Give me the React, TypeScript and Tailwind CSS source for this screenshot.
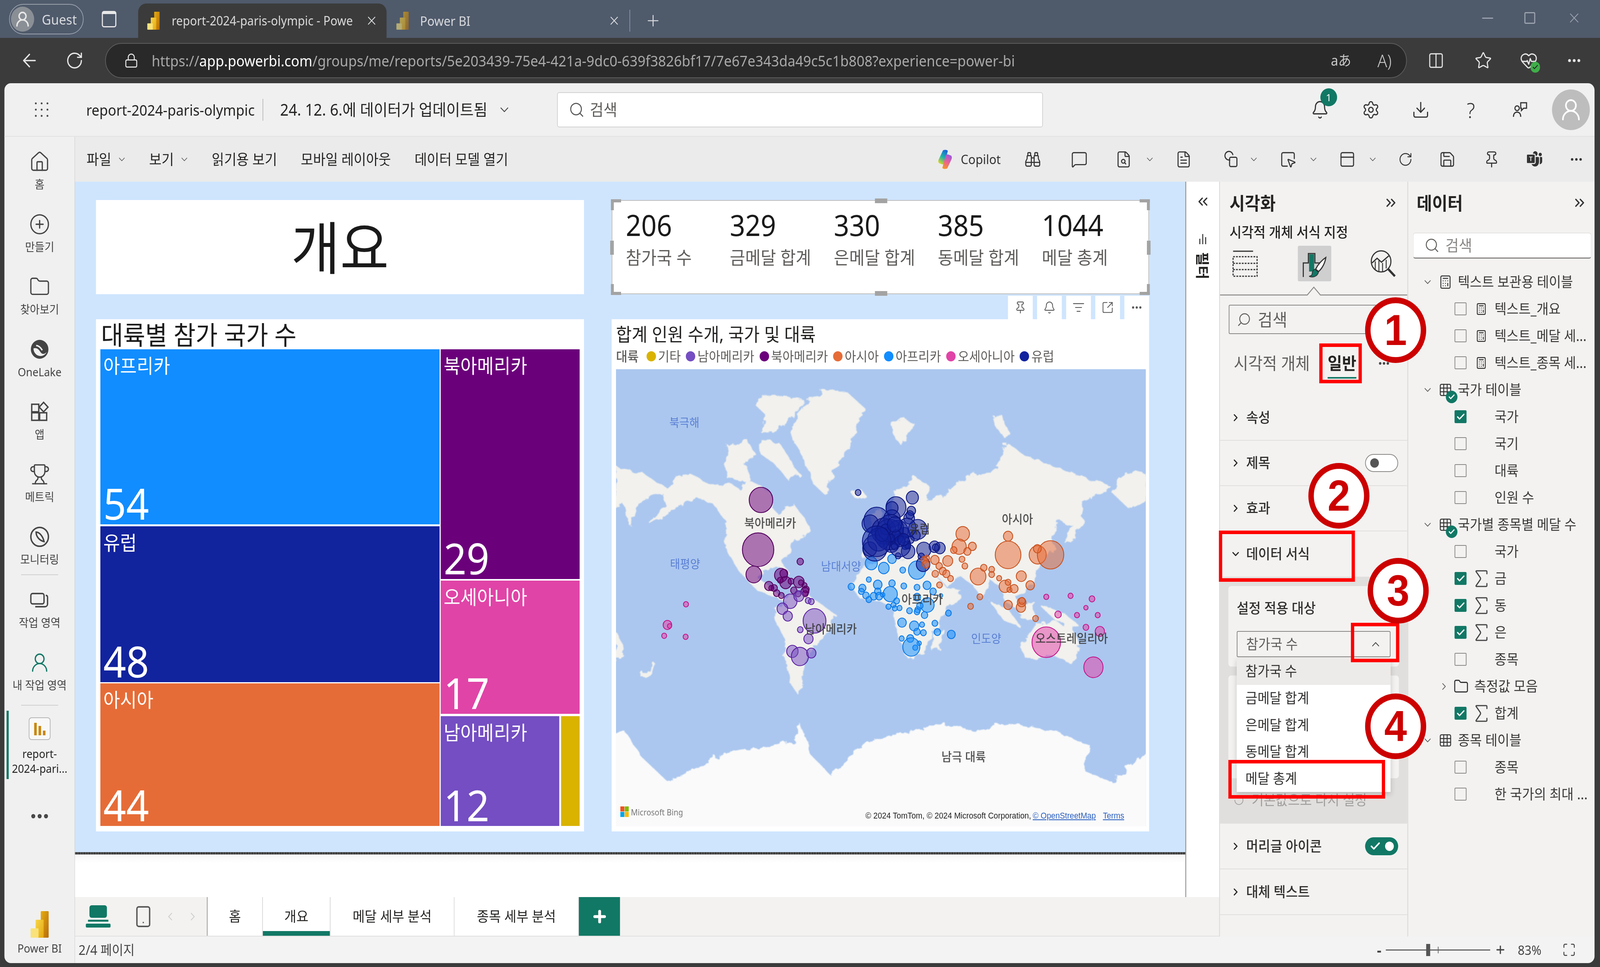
import type { ReactNode } from "react";
import {
  ArrowLeft,
  Bell,
  Binoculars,
  Calculator,
  Check,
  ChevronDown,
  ChevronLeft,
  ChevronRight,
  ChevronUp,
  ChevronsLeft,
  ChevronsRight,
  CirclePlus,
  Columns2,
  Download,
  Ellipsis,
  FileSearch,
  FileText,
  Folder,
  Grid3x3,
  HeartPulse,
  House,
  ListFilter,
  Lock,
  Maximize,
  MessageSquare,
  PanelTop,
  Pin,
  Plus,
  RotateCw,
  Save,
  Search,
  Settings,
  Sigma,
  Smartphone,
  SquareArrowOutUpRight,
  SquareMousePointer,
  Star,
  Trophy,
  UserRound,
  X,
} from "lucide-react";
import { BsMicrosoftTeams } from "react-icons/bs";

function PowerBiIcon({ className }: { className?: string }) {
  return (
    <svg viewBox="0 0 50 68" className={className}>
      <defs>
        <linearGradient id="pb-a" x1="0" y1="0" x2="1" y2="1">
          <stop offset="0" stopColor="#e6ad10" />
          <stop offset="1" stopColor="#b66a08" />
        </linearGradient>
        <linearGradient id="pb-b" x1="0" y1="0" x2="1" y2="1">
          <stop offset="0" stopColor="#f6d54a" />
          <stop offset="1" stopColor="#e5a80f" />
        </linearGradient>
      </defs>
      <rect x="28" y="0" width="22" height="68" rx="2" fill="url(#pb-a)" />
      <rect x="14" y="22" width="22" height="46" rx="2" fill="url(#pb-b)" />
      <rect x="0" y="44" width="22" height="24" rx="2" fill="#f9e27a" />
    </svg>
  );
}

function CopilotIcon() {
  return (
    <svg viewBox="0 0 46 60" className="h-[50px] w-[46px]">
      <defs>
        <linearGradient id="co-a" x1="0.7" y1="0" x2="0.2" y2="1">
          <stop offset="0" stopColor="#1b66d8" />
          <stop offset="0.5" stopColor="#21b4a8" />
          <stop offset="1" stopColor="#e8d71e" />
        </linearGradient>
        <linearGradient id="co-b" x1="0.7" y1="0" x2="0.3" y2="1">
          <stop offset="0" stopColor="#9a58e0" />
          <stop offset="0.5" stopColor="#e8609a" />
          <stop offset="1" stopColor="#f7942a" />
        </linearGradient>
      </defs>
      <path d="M16 2C22 0 30 0 32 4L22 40C20 46 14 46 10 44L4 42C0 40 0 34 2 30Z" fill="url(#co-a)" />
      <path d="M30 58C24 60 16 60 14 56L24 20C26 14 32 14 36 16L42 18C46 20 46 26 44 30Z" fill="url(#co-b)" />
    </svg>
  );
}

function ShapesIcon() {
  return (
    <svg viewBox="0 0 24 24" className="h-[44px] w-[44px]" fill="none" stroke="#333" strokeWidth="1.6">
      <path d="M11 12.5A6 6 0 1 1 15 6" />
      <rect x="10" y="9" width="11" height="13" rx="2" />
    </svg>
  );
}

function ShareIcon() {
  return (
    <svg viewBox="0 0 24 24" className="h-[48px] w-[48px]" fill="none" stroke="#333" strokeWidth="1.5">
      <circle cx="8" cy="10" r="3" />
      <path d="M3 21c0-4 2-6 5-6s5 2 5 6" />
      <path d="M13 3h8v7h-4l-3 3v-3h-1z" />
    </svg>
  );
}

function OneLakeIcon() {
  return (
    <svg viewBox="0 0 24 24" className="h-[58px] w-[58px]">
      <circle cx="12" cy="12" r="10" fill="#444" />
      <path d="M5 11c4-1 6 1 8 4s5 2 7 0a8 8 0 0 1-15-4z" fill="#f0f0f0" />
      <path d="M8 8c3 0 5 2 7 5" stroke="#f0f0f0" strokeWidth="1.6" fill="none" />
    </svg>
  );
}

function AppsIcon() {
  return (
    <svg viewBox="0 0 24 24" className="h-[58px] w-[58px]" fill="none" stroke="#444" strokeWidth="1.5">
      <rect x="3" y="4" width="8" height="8" />
      <rect x="3" y="13" width="8" height="8" />
      <rect x="12" y="13" width="8" height="8" />
      <path d="M16.5 2l5 5-5 5-5-5z" />
    </svg>
  );
}

function MonitorIcon() {
  return (
    <svg viewBox="0 0 24 24" className="h-[58px] w-[58px]" fill="none" stroke="#444" strokeWidth="1.6">
      <circle cx="12" cy="12" r="10" />
      <path d="M8 7c4 0 8 5 9 10C12 16 8 12 8 7z" />
    </svg>
  );
}

function WorkspacesIcon() {
  return (
    <svg viewBox="0 0 24 24" className="h-[58px] w-[58px]" fill="none" stroke="#444" strokeWidth="1.5">
      <rect x="2" y="5" width="15" height="11" rx="2" />
      <path d="M19 7c1.500 0 2 .8 2 2v7c0 1.500-1 3-3 3H7" />
    </svg>
  );
}

function ReportNavIcon() {
  return (
    <div className="flex h-[58px] w-[60px] items-end justify-center gap-[5px] rounded-[8px] border-2 border-[#b5b5b5] bg-[#f8f8f8] pb-[10px]">
      <span className="h-[32px] w-[7px] bg-[#c9860c]" />
      <span className="h-[24px] w-[7px] bg-[#c9860c]" />
      <span className="h-[12px] w-[7px] bg-[#c9860c]" />
    </div>
  );
}

function NavItem({ icon, label, active }: { icon: ReactNode; label: string; active?: boolean }) {
  return (
    <div className="flex h-[160px] flex-col items-center justify-end gap-[12px] pb-[24px]">
      <div className="flex h-[62px] items-center">{icon}</div>
      <span className={`text-[29px] leading-none ${active ? "text-[#117865]" : "text-[#444]"}`}>{label}</span>
    </div>
  );
}

function LeftNav() {
  const ic = "h-[58px] w-[58px] text-[#444]";
  return (
    <div className="flex w-[194px] flex-col bg-[#f0f0f0]">
      <NavItem icon={<House className={ic} strokeWidth={1.4} />} label="홈" />
      <NavItem icon={<CirclePlus className={ic} strokeWidth={1.4} />} label="만들기" />
      <NavItem icon={<Folder className={ic} strokeWidth={1.4} />} label="찾아보기" />
      <NavItem icon={<OneLakeIcon />} label="OneLake" />
      <NavItem icon={<AppsIcon />} label="앱" />
      <NavItem icon={<Trophy className={ic} strokeWidth={1.4} />} label="메트릭" />
      <NavItem icon={<MonitorIcon />} label="모니터링" />
      <div className="mx-[46px] h-[2px] bg-[#d0d0d0]" />
      <NavItem icon={<WorkspacesIcon />} label="작업 영역" />
      <NavItem
        icon={<UserRound className="h-[58px] w-[58px] text-[#117865]" strokeWidth={1.4} />}
        label="내 작업 영역"
      />
      <div className="mx-[46px] mt-[12px] h-[2px] bg-[#d0d0d0]" />
      <div className="relative mt-[30px] flex h-[158px] flex-col items-center gap-[16px]">
        <span className="absolute bottom-0 left-[6px] top-[-17px] w-[6px] bg-[#117865]" />
        <ReportNavIcon />
        <span className="text-center text-[29px] leading-[38px] text-[#252423]">
          report-
          <br />
          2024-pari...
        </span>
      </div>
      <div className="flex h-[190px] items-center justify-center">
        <Ellipsis className="h-[60px] w-[60px] text-[#444]" strokeWidth={2.4} />
      </div>
      <div className="mt-auto flex flex-col items-center gap-[12px] pb-[24px]">
        <PowerBiIcon className="h-[68px] w-[50px]" />
        <span className="text-[29px] leading-none text-[#444]">Power BI</span>
      </div>
    </div>
  );
}

function BrowserBars() {
  return (
    <>
      <div className="flex h-[97px] items-end bg-[#4f5a6b] text-[#d8dadd]">
        <div className="mb-[9px] ml-[25px] flex h-[78px] w-[205px] items-center rounded-[39px] border-2 border-[#98a0ac] pl-[3px]">
          <div className="flex h-[64px] w-[64px] items-center justify-center rounded-full bg-[#8a8f96]">
            <UserRound className="h-[46px] w-[46px] text-[#e8e8e8]" strokeWidth={2} />
          </div>
          <span className="ml-[21px] text-[35px] leading-none">Guest</span>
        </div>
        <div className="mb-[27px] ml-[50px] h-[42px] w-[40px] rounded-[6px] border-[3px] border-t-[8px] border-[#e8e8e8]" />
        <div className="ml-[60px] flex h-[88px] w-[683px] items-center rounded-t-[22px] bg-[#3b3b3b] pl-[22px]">
          <PowerBiIcon className="h-[46px] w-[40px]" />
          <span className="ml-[30px] w-[520px] whitespace-nowrap text-[32px] leading-none text-[#d9d9d9]">
            report-2024-paris-olympic - Powe
          </span>
          <X className="ml-[12px] h-[36px] w-[36px]" strokeWidth={1.6} />
        </div>
        <div className="flex h-[88px] items-center">
          <PowerBiIcon className="ml-[24px] h-[46px] w-[40px] opacity-60" />
          <span className="ml-[28px] w-[516px] text-[33px] leading-none">Power BI</span>
          <X className="h-[36px] w-[36px]" strokeWidth={1.6} />
          <div className="ml-[24px] h-[56px] w-[2px] bg-[#8a93a0]" />
          <Plus className="ml-[40px] h-[46px] w-[46px]" strokeWidth={1.4} />
        </div>
        <div className="mb-[30px] ml-auto flex items-center gap-[86px] pr-[50px] text-[#9aa2ae]">
          <div className="h-[3px] w-[30px] bg-[#9aa2ae]" />
          <div className="h-[30px] w-[30px] rounded-[4px] border-[3px] border-[#9aa2ae]" />
          <X className="h-[42px] w-[42px]" strokeWidth={1.2} />
        </div>
      </div>
      <div className="flex h-[116px] items-center bg-[#3b3b3b] text-[#e6e6e6]">
        <ArrowLeft className="ml-[54px] h-[54px] w-[54px]" strokeWidth={1.6} />
        <RotateCw className="ml-[72px] h-[50px] w-[50px]" strokeWidth={1.6} />
        <div className="ml-[59px] flex h-[90px] w-[3580px] items-center rounded-[45px] border-2 border-[#5d5d5d] bg-[#292929]">
          <Lock className="ml-[50px] h-[40px] w-[40px]" strokeWidth={1.6} />
          <span className="ml-[36px] text-[38px] leading-none text-[#a8a8a8]">
            https://<span className="text-white">app.powerbi.com</span>
            /groups/me/reports/5e203439-75e4-421a-9dc0-639f3826bf17/7e67e343da49c5c1b808?experience=power-bi
          </span>
          <span className="ml-auto text-[36px] leading-none text-[#c8c8c8]">aあ</span>
          <span className="ml-[72px] mr-[40px] text-[44px] font-light leading-none text-[#c8c8c8]">A)</span>
        </div>
        <Columns2 className="ml-[57px] h-[46px] w-[46px]" strokeWidth={1.5} />
        <Star className="ml-[83px] h-[48px] w-[48px]" strokeWidth={1.5} />
        <div className="relative ml-[76px]">
          <HeartPulse className="h-[50px] w-[50px]" strokeWidth={1.5} />
          <span className="absolute bottom-[-6px] right-[-6px] flex h-[28px] w-[26px] items-center justify-center rounded-full bg-[#3fae49]">
            <Check className="h-[18px] w-[18px] text-[#222]" strokeWidth={3} />
          </span>
        </div>
        <Ellipsis className="ml-[78px] h-[44px] w-[44px]" strokeWidth={2.2} />
      </div>
    </>
  );
}

function AppHeader() {
  const ic = "h-[50px] w-[50px] text-[#333]";
  return (
    <div className="flex h-[137px] items-center border-b-2 border-[#e2e2e2] bg-[#f0f0f0] text-[#252423]">
      <div className="flex w-[1520px] shrink-0 items-center">
        <div className="ml-[84px] grid grid-cols-3 gap-x-[11px] gap-y-[11px]">
          {Array.from({ length: 9 }).map((_, i) => (
            <span key={i} className="h-[5px] w-[5px] rounded-full bg-[#444]" />
          ))}
        </div>
        <span className="ml-[104px] text-[38px] leading-none">report-2024-paris-olympic</span>
        <div className="ml-[22px] h-[56px] w-[2px] bg-[#bbb]" />
        <span className="ml-[46px] text-[41px] leading-none">24. 12. 6.에 데이터가 업데이트됨</span>
        <ChevronDown className="ml-[28px] h-[38px] w-[38px] text-[#444]" strokeWidth={1.5} />
      </div>
      <div className="flex h-[90px] w-[1336px] items-center rounded-[6px] border-2 border-[#d2d2d2] bg-white">
        <Search className="ml-[30px] h-[44px] w-[44px] text-[#555]" strokeWidth={1.5} />
        <span className="ml-[14px] text-[41px] leading-none text-[#605e5c]">검색</span>
      </div>
      <div className="ml-auto flex items-center pr-[13px]">
        <div className="relative">
          <Bell className={ic} strokeWidth={1.5} />
          <span className="absolute right-[-22px] top-[-30px] flex h-[46px] w-[46px] items-center justify-center rounded-full bg-[#117865] text-[26px] leading-none text-white">
            1
          </span>
        </div>
        <Settings className={`ml-[90px] ${ic}`} strokeWidth={1.5} />
        <Download className={`ml-[87px] ${ic}`} strokeWidth={1.5} />
        <span className="ml-[94px] w-[38px] text-center text-[54px] font-light leading-none text-[#333]">?</span>
        <div className="ml-[92px]">
          <ShareIcon />
        </div>
        <div className="ml-[64px] flex h-[104px] w-[104px] items-center justify-center rounded-full bg-[#bdbdbd]">
          <UserRound className="h-[66px] w-[66px] text-white" strokeWidth={1.6} />
        </div>
      </div>
    </div>
  );
}

function ToolText({ label, chevron, className }: { label: string; chevron?: boolean; className: string }) {
  return (
    <div className={`flex items-center gap-[15px] ${className}`}>
      <span className="text-[37px] leading-none">{label}</span>
      {chevron && <ChevronDown className="h-[28px] w-[28px] text-[#555]" strokeWidth={1.5} />}
    </div>
  );
}

function Chev({ className }: { className: string }) {
  return <ChevronDown className={`h-[28px] w-[28px] text-[#555] ${className}`} strokeWidth={1.5} />;
}

function Toolbar() {
  const ic = "h-[46px] w-[46px] text-[#333]";
  return (
    <div className="flex h-[115px] items-center bg-[#ebebeb] text-[#252423]">
      <ToolText label="파일" chevron className="ml-[32px]" />
      <ToolText label="보기" chevron className="ml-[61px]" />
      <ToolText label="읽기용 보기" className="ml-[61px]" />
      <ToolText label="모바일 레이아웃" className="ml-[65px]" />
      <ToolText label="데이터 모델 열기" className="ml-[65px]" />
      <div className="ml-auto flex items-center pr-[30px]">
        <CopilotIcon />
        <span className="ml-[20px] text-[33px] leading-none text-[#333]">Copilot</span>
        <Binoculars className={`ml-[65px] ${ic}`} strokeWidth={1.5} />
        <MessageSquare className={`ml-[82px] ${ic}`} strokeWidth={1.5} />
        <FileSearch className={`ml-[76px] ${ic}`} strokeWidth={1.5} />
        <Chev className="ml-[35px]" />
        <FileText className={`ml-[56px] ${ic}`} strokeWidth={1.5} />
        <div className="ml-[85px]">
          <ShapesIcon />
        </div>
        <Chev className="ml-[27px]" />
        <SquareMousePointer className={`ml-[57px] ${ic}`} strokeWidth={1.5} />
        <Chev className="ml-[33px]" />
        <PanelTop className={`ml-[56px] ${ic}`} strokeWidth={1.5} />
        <Chev className="ml-[33px]" />
        <RotateCw className="ml-[56px] h-[40px] w-[40px] text-[#333]" strokeWidth={1.5} />
        <Save className={`ml-[72px] ${ic}`} strokeWidth={1.5} />
        <Pin className={`ml-[76px] ${ic}`} strokeWidth={1.5} />
        <BsMicrosoftTeams className="ml-[74px] h-[42px] w-[42px] text-[#333]" />
        <Ellipsis className="ml-[74px] h-[40px] w-[40px] text-[#333]" strokeWidth={2} />
      </div>
    </div>
  );
}

function TreeCell({ label, value, color, className }: { label: string; value: number; color: string; className: string }) {
  return (
    <div className={`flex flex-col justify-between pl-[8px] text-white ${color} ${className}`}>
      <span className="pt-[12px] text-[50px] leading-[60px]">{label}</span>
      <span className="text-[110px] leading-none">{value}</span>
    </div>
  );
}

function Treemap() {
  return (
    <div className="bg-white pl-[12px]">
      <div className="flex h-[77px] items-center pl-[2px] text-[66px] leading-none text-[#1a1a1a]">대륙별 참가 국가 수</div>
      <div className="flex w-[1318px] gap-[3px]">
        <div className="flex w-[933px] flex-col">
          <TreeCell label="아프리카" value={54} color="bg-[#118dff]" className="h-[448px]" />
          <TreeCell label="유럽" value={48} color="bg-[#12239e]" className="mt-[5px] h-[399px]" />
          <TreeCell label="아시아" value={44} color="bg-[#e66c37]" className="mt-[3px] h-[365px]" />
        </div>
        <div className="flex w-[382px] flex-col">
          <TreeCell label="북아메리카" value={29} color="bg-[#6b007b]" className="h-[588px]" />
          <TreeCell label="오세아니아" value={17} color="bg-[#e044a7]" className="mt-[4px] h-[341px]" />
          <div className="mt-[6px] flex h-[281px] gap-[5px]">
            <TreeCell label="남아메리카" value={12} color="bg-[#744ec2]" className="w-[326px]" />
            <div className="w-[51px] bg-[#d9b300]" />
          </div>
        </div>
      </div>
    </div>
  );
}

const KPIS = [
  ["206", "참가국 수"],
  ["329", "금메달 합계"],
  ["330", "은메달 합계"],
  ["385", "동메달 합계"],
  ["1044", "메달 총계"],
];

function KpiCard() {
  const h = "absolute bg-[#a3a3a3]";
  return (
    <div className="relative border-2 border-[#bdbdbd] bg-white">
      <div className="flex pl-[37px] pt-[25px]">
        {KPIS.map(([value, label]) => (
          <div key={label} className="w-[286px]">
            <div className="text-[74px] leading-[74px] text-[#1a1a1a]">{value}</div>
            <div className="mt-[15px] text-[46px] leading-[60px] text-[#605e5c]">{label}</div>
          </div>
        ))}
      </div>
      {/* selection handles */}
      <span className={`${h} left-[-4px] top-[-4px] h-[8px] w-[28px]`} />
      <span className={`${h} left-[-4px] top-[-4px] h-[28px] w-[8px]`} />
      <span className={`${h} right-[-4px] top-[-4px] h-[8px] w-[28px]`} />
      <span className={`${h} right-[-4px] top-[-4px] h-[28px] w-[8px]`} />
      <span className={`${h} bottom-[-4px] left-[-4px] h-[8px] w-[28px]`} />
      <span className={`${h} bottom-[-4px] left-[-4px] h-[28px] w-[8px]`} />
      <span className={`${h} bottom-[-4px] right-[-4px] h-[8px] w-[28px]`} />
      <span className={`${h} bottom-[-4px] right-[-4px] h-[28px] w-[8px]`} />
      <span className={`${h} left-[722px] top-[-6px] h-[12px] w-[34px]`} />
      <span className={`${h} bottom-[-6px] left-[722px] h-[12px] w-[34px]`} />
      <span className={`${h} left-[-6px] top-[102px] h-[36px] w-[10px]`} />
      <span className={`${h} right-[-6px] top-[102px] h-[36px] w-[10px]`} />
    </div>
  );
}

const LAND = [
  // north america
  "M200 515L240 500 290 530 345 530 380 545 400 520 440 540 470 560 470 600 490 625 510 600 530 590 560 630 577 660 560 690 530 690 520 730 500 760 517 795 495 775 470 775 440 780 430 810 465 835 490 860 525 872 500 872 470 860 430 842 400 810 370 770 345 720 345 640 310 590 260 570 215 590 180 620 130 645 175 600 165 560Z",
  "M440 265L500 275 560 285 530 330 490 370 440 375 460 330 430 300Z",
  "M350 420L400 400 420 440 390 470 345 470Z",
  "M440 400L490 410 545 500 520 520 480 470 440 440Z",
  "M340 470L370 460 400 480 410 520 350 515Z",
  // greenland
  "M525 380L560 300 620 255 680 260 732 310 700 370 680 440 640 500 620 560 590 530 560 450Z",
  "M812 355L835 340 865 350 850 385 830 410 815 385Z",
  "M1090 335L1110 325 1135 380 1115 385Z",
  "M700 560L722 550 730 565 710 575Z",
  // south america
  "M520 870L560 850 600 880 652 920 630 960 600 1000 570 1030 555 1085 545 1150 525 1120 512 1050 510 990 480 930 490 890Z",
  // africa
  "M720 790L780 745 880 755 920 790 960 840 1002 850 950 910 915 980 890 1030 850 1040 822 960 812 900 770 872 722 870 692 830Z",
  "M925 980L950 960 940 1015 925 1025Z",
  // eurasia
  "M730 752L738 700 770 682 782 645 812 620 820 560 870 510 912 540 900 582 960 560 1020 510 1100 490 1130 410 1180 450 1260 480 1340 510 1420 540 1385 560 1342 582 1330 640 1310 650 1280 640 1250 690 1262 722 1222 762 1210 802 1190 842 1150 860 1172 905 1130 880 1110 830 1080 810 1060 865 1040 832 1000 800 962 832 920 782 880 762 842 745 790 745Z",
  "M750 625L775 605 778 655 750 660Z",
  "M1312 660L1330 620 1345 640 1320 690 1290 700Z",
  "M1440 510L1490 495 1518 505 1518 585 1470 600 1430 560Z",
  "M35 480L60 490 110 500 150 530 185 548 150 560 110 575 90 600 75 652 68 625 60 590 35 600Z",
  // islands, australia
  "M1085 880L1130 900 1165 950 1120 930Z",
  "M1165 890L1205 880 1205 930 1170 925Z",
  "M1230 895L1290 915 1330 950 1270 935Z",
  "M1170 1000L1200 960 1255 930 1285 950 1300 935 1335 1010 1310 1060 1270 1040 1180 1040Z",
  "M108 1100L140 1058 130 1085 118 1102Z",
  "M35 970L55 1010 45 1045 35 1052Z",
];

const ANTARCTICA =
  "M25 1265L60 1260 110 1340 180 1410 240 1380 330 1330 430 1310 480 1300 530 1290 555 1240 580 1330 640 1395 700 1320 760 1285 860 1260 960 1240 1040 1260 1140 1240 1260 1260 1360 1300 1350 1380 1420 1410 1490 1350 1530 1310 1530 1560 25 1560Z";

type Bubble = [number, number, number];

const BUBBLES: { color: string; stroke: string; items: Bubble[] }[] = [
  {
    color: "#6b007b",
    stroke: "#55005f",
    items: [
      [433, 725, 44], [441, 578, 33], [421, 798, 22], [551, 760, 9], [497, 800, 18], [505, 795, 11],
      [510, 822, 16], [547, 820, 15], [525, 818, 8], [495, 815, 8], [463, 832, 12], [478, 838, 9],
      [470, 838, 7], [485, 853, 9], [498, 860, 8], [533, 845, 9], [563, 830, 7], [567, 842, 9],
      [564, 848, 11], [565, 855, 8], [553, 822, 7], [545, 855, 8],
    ],
  },
  {
    color: "#744ec2",
    stroke: "#5a1fa0",
    items: [
      [591, 935, 32], [523, 877, 19], [501, 899, 15], [516, 921, 13], [547, 862, 14], [573, 875, 8],
      [582, 878, 8], [551, 961, 8], [574, 988, 13], [529, 1025, 16], [550, 1040, 24], [582, 1030, 13],
    ],
  },
  {
    color: "#118dff",
    stroke: "#0a78e6",
    items: [
      [878, 785, 24], [750, 765, 17], [785, 779, 15], [808, 752, 12], [838, 785, 8], [743, 813, 7],
      [768, 828, 12], [808, 824, 9], [841, 832, 8], [878, 836, 8], [906, 830, 11], [923, 848, 9],
      [694, 834, 9], [725, 838, 10], [722, 848, 8], [735, 860, 9], [743, 872, 8], [768, 848, 9],
      [757, 862, 10], [772, 862, 10], [782, 858, 6], [803, 856, 20], [821, 876, 8], [798, 893, 7],
      [812, 888, 7], [816, 898, 7], [829, 897, 7], [878, 865, 10], [907, 888, 19], [886, 890, 9],
      [880, 902, 8], [878, 908, 8], [857, 905, 8], [899, 918, 9], [966, 912, 8], [836, 940, 12],
      [870, 950, 13], [892, 946, 7], [878, 967, 9], [896, 970, 8], [928, 942, 8], [935, 968, 9],
      [974, 975, 11], [835, 987, 7], [859, 987, 10], [884, 1001, 6], [873, 1014, 7], [862, 1012, 24],
      [945, 860, 5],
    ],
  },
  {
    color: "#12239e",
    stroke: "#0b1580",
    items: [
      [713, 556, 8], [865, 571, 17], [819, 600, 28], [808, 602, 17], [862, 610, 12], [765, 640, 36],
      [747, 648, 23], [808, 633, 23], [856, 632, 15], [858, 622, 11], [785, 670, 34], [880, 665, 26],
      [825, 670, 28], [760, 720, 34], [746, 723, 19], [806, 708, 22], [853, 730, 19], [795, 670, 10],
      [810, 700, 8], [843, 675, 14], [820, 690, 18], [850, 710, 10], [873, 683, 14], [780, 708, 7],
      [800, 702, 8], [845, 713, 10], [853, 715, 7], [825, 743, 8], [897, 725, 20], [927, 716, 15],
      [942, 720, 15], [930, 718, 9], [890, 745, 9], [895, 768, 19], [835, 690, 12], [860, 695, 10],
      // dense middle of the cluster
      [800, 680, 40], [770, 695, 30], [830, 712, 30], [850, 660, 25], [804, 662, 36], [820, 680, 12],
      [790, 665, 14], [805, 690, 10], [830, 700, 14], [815, 715, 9], [840, 695, 16], [780, 680, 18],
      [815, 650, 20], [765, 700, 40],
    ],
  },
  {
    color: "#e66c37",
    stroke: "#c8521f",
    items: [
      [1006, 678, 19], [996, 716, 20], [1033, 715, 11], [1019, 730, 10], [981, 726, 9], [1133, 685, 13],
      [1133, 740, 36], [1216, 740, 24], [1252, 740, 37], [1215, 722, 11], [964, 758, 14], [928, 755, 12],
      [905, 750, 8], [898, 755, 9], [903, 768, 10], [940, 773, 9], [950, 788, 10], [960, 796, 10],
      [972, 810, 8], [929, 796, 9], [941, 829, 8], [1004, 753, 8], [1012, 773, 8], [1049, 804, 22],
      [1065, 778, 9], [1087, 783, 8], [1087, 798, 8], [1108, 809, 7], [1170, 803, 14], [1124, 833, 16],
      [1133, 821, 8], [1137, 843, 7], [1150, 840, 11], [1195, 830, 12], [1054, 864, 8], [1028, 892, 8],
      [1133, 888, 12], [1169, 895, 13], [1171, 880, 12], [1172, 876, 9], [1210, 928, 8],
    ],
  },
  {
    color: "#e044a7",
    stroke: "#c4168c",
    items: [
      [1240, 998, 40], [1372, 1072, 27], [1390, 966, 13], [1273, 916, 9], [1240, 864, 7], [1308, 861, 7],
      [1368, 870, 8], [1351, 896, 6], [1326, 918, 7], [1384, 918, 7], [1351, 954, 8], [231, 886, 7],
      [179, 947, 12], [185, 950, 6], [170, 979, 7], [230, 982, 7],
    ],
  },
];

const SEA_LABELS: [string, number, number][] = [
  ["북극해", 188, 135],
  ["태평양", 190, 497],
  ["남대서양", 619, 503],
  ["인도양", 1018, 688],
];

const LAND_LABELS: [string, number, number][] = [
  ["북아메리카", 424, 393],
  ["아시아", 1104, 383],
  ["유럽", 835, 408],
  ["아프리카", 842, 588],
  ["남아메리카", 591, 664],
  ["오스트레일리아", 1253, 688],
  ["남극 대륙", 956, 991],
];

function WorldMap() {
  return (
    <svg viewBox="0 0 1457 1170" className="block h-[1170px] w-[1457px] bg-[#abc7ef]">
      <defs>
        <clipPath id="map-clip">
          <rect width="1457" height="1170" />
        </clipPath>
        <filter id="coast" x="-5%" y="-5%" width="110%" height="110%">
          <feTurbulence type="fractalNoise" baseFrequency="0.035" numOctaves="4" seed="7" />
          <feDisplacementMap in="SourceGraphic" scale="26" />
          <feGaussianBlur stdDeviation="1" />
        </filter>
      </defs>
      <g clipPath="url(#map-clip)">
        <g transform="translate(-34.4 -166.5) scale(.982 .867)">
          <g filter="url(#coast)">
            {LAND.map((d, i) => (
              <path key={i} d={d} fill="#f2f1ed" stroke="#f2f1ed" strokeWidth="4" strokeLinejoin="round" />
            ))}
            <path d={ANTARCTICA} fill="#fafafa" />
          </g>
          {BUBBLES.map((g) =>
            g.items.map(([x, y, r], i) => (
              <ellipse
                key={g.color + i}
                cx={x}
                cy={y}
                rx={r}
                ry={r * 1.133}
                fill={g.color}
                fillOpacity={0.52}
                stroke={g.stroke}
                strokeWidth={2.4}
              />
            )),
          )}
        </g>
      </g>
      {SEA_LABELS.map(([t, x, y]) => (
        <text key={t} x={x} y={y} textAnchor="middle" dominantBaseline="central" fontSize="30" fill="#5a7fd4">
          {t}
        </text>
      ))}
      {LAND_LABELS.map(([t, x, y]) => (
        <text
          key={t}
          x={x}
          y={y}
          textAnchor="middle"
          dominantBaseline="central"
          fontSize="31"
          fontWeight="500"
          fill="#333"
          fillOpacity={0.85}
        >
          {t}
        </text>
      ))}
      <g transform="translate(12 1119)">
        <rect width="11" height="13" fill="#f25022" />
        <rect x="12" width="11" height="13" fill="#7fba00" />
        <rect y="14" width="11" height="13" fill="#00a4ef" />
        <rect x="12" y="14" width="11" height="13" fill="#ffb900" />
      </g>
      <text x="41" y="1142" fontSize="21" fill="#777">
        Microsoft Bing
      </text>
      <text x="686" y="1150" fontSize="21.500" fill="#222" fontFamily="'Liberation Sans',sans-serif">
        © 2024 TomTom, © 2024 Microsoft Corporation,
      </text>
      <text x="1146" y="1150" fontSize="21.500" fill="#2a5fc0" textDecoration="underline" fontFamily="'Liberation Sans',sans-serif">
        © OpenStreetMap
      </text>
      <text x="1339" y="1150" fontSize="21.500" fill="#2a5fc0" textDecoration="underline" fontFamily="'Liberation Sans',sans-serif">
        Terms
      </text>
    </svg>
  );
}

const LEGEND = [
  ["기타", "bg-[#d9b300]"],
  ["남아메리카", "bg-[#744ec2]"],
  ["북아메리카", "bg-[#6b007b]"],
  ["아시아", "bg-[#e66c37]"],
  ["아프리카", "bg-[#118dff]"],
  ["오세아니아", "bg-[#e044a7]"],
  ["유럽", "bg-[#12239e]"],
];

function MapCard() {
  const tile = "flex h-[60px] w-[68px] items-center justify-center bg-white";
  return (
    <div className="relative bg-white pl-[12px]">
      <div className="absolute right-0 top-[-60px] flex gap-[12px] text-[#555]">
        <div className={tile}>
          <Pin className="h-[34px] w-[34px]" strokeWidth={1.5} />
        </div>
        <div className={tile}>
          <Bell className="h-[34px] w-[34px]" strokeWidth={1.5} />
        </div>
        <div className={tile}>
          <ListFilter className="h-[34px] w-[34px]" strokeWidth={1.5} />
        </div>
        <div className={tile}>
          <SquareArrowOutUpRight className="h-[34px] w-[34px]" strokeWidth={1.5} />
        </div>
        <div className={tile}>
          <Ellipsis className="h-[34px] w-[34px]" strokeWidth={2.2} />
        </div>
      </div>
      <div className="flex h-[62px] items-end text-[47px] leading-none text-[#252423]">합계 인원 수개, 국가 및 대륙</div>
      <div className="flex h-[66px] items-center gap-[7px] text-[34px] leading-none text-[#605e5c]">
        <span className="mr-[14px] font-medium">대륙</span>
        {LEGEND.map(([label, dot]) => (
          <div key={label} className="mr-[7px] flex items-center gap-[6px]">
            <span className={`h-[26px] w-[26px] rounded-full ${dot}`} />
            <span>{label}</span>
          </div>
        ))}
      </div>
      <WorldMap />
    </div>
  );
}

function Canvas() {
  return (
    <div className="flex flex-1 flex-col">
      <div className="h-[1716px] bg-[#cfe5fe] pl-[58px] pt-[47px]">
        <div className="grid grid-cols-[1342px_1478px] grid-rows-[241px_1311px] gap-x-[76px] gap-y-[64px]">
          <div className="flex items-center justify-center bg-white text-[146px] leading-none text-[#1a1a1a]">개요</div>
          <KpiCard />
          <Treemap />
          <MapCard />
        </div>
      </div>
      <div className="h-[6px] bg-[repeating-linear-gradient(90deg,#555_0_3px,transparent_3px_7px)]" />
      <div className="flex-1 bg-gradient-to-b from-[#f6f6f6] to-white to-[20%]" />
    </div>
  );
}

function FilterStrip() {
  return (
    <div className="flex w-[93px] flex-col items-center border-l-2 border-[#8a8a8a] bg-white pt-[30px]">
      <ChevronsLeft className="h-[42px] w-[42px] text-[#333]" strokeWidth={2} />
      <div className="mt-[62px] flex h-[26px] items-end gap-[5px]">
        <span className="h-[14px] w-[3px] bg-[#444]" />
        <span className="h-[26px] w-[3px] bg-[#444]" />
        <span className="h-[18px] w-[3px] bg-[#444]" />
      </div>
      <span className="mt-[20px] text-[38px] font-bold leading-none text-[#252423] [text-orientation:sideways] [writing-mode:vertical-rl]">
        필터
      </span>
    </div>
  );
}

function PageTabs() {
  const tab = "flex items-center justify-center border-r-2 border-[#d8d8d8] bg-white text-[36px] leading-none text-[#252423]";
  return (
    <div className="flex h-[101px] border-b-2 border-[#e0e0e0] bg-[#f3f2f1]">
      <div className="flex w-[365px] items-center border-r-2 border-[#8a8a8a]">
        <div className="ml-[30px] flex flex-col items-center gap-[5px]">
          <div className="h-[32px] w-[48px] rounded-[6px] bg-[#117865]" />
          <div className="h-[5px] w-[56px] bg-[#117865]" />
          <div className="h-[10px] w-[68px] rounded-[3px] bg-[#117865]" />
        </div>
        <Smartphone className="ml-[60px] h-[60px] w-[60px] text-[#555]" strokeWidth={1.5} />
        <ChevronLeft className="ml-[27px] h-[34px] w-[34px] text-[#ccc]" strokeWidth={1.5} />
        <ChevronRight className="ml-[28px] h-[34px] w-[34px] text-[#ccc]" strokeWidth={1.5} />
      </div>
      <div className={`${tab} w-[152px]`}>홈</div>
      <div className={`${tab} relative w-[186px]`}>
        개요
        <span className="absolute bottom-0 left-0 right-0 h-[12px] bg-[#117865]" />
      </div>
      <div className={`${tab} w-[341px]`}>메달 세부 분석</div>
      <div className={`${tab} w-[342px] border-r-0`}>종목 세부 분석</div>
      <div className="flex w-[113px] items-center justify-center bg-[#117865]">
        <Plus className="h-[46px] w-[46px] text-white" strokeWidth={4} />
      </div>
    </div>
  );
}

function Toggle({ on }: { on: boolean }) {
  if (on) {
    return (
      <div className="mr-[25px] flex h-[46px] w-[91px] items-center justify-between rounded-full bg-[#117865] px-[12px]">
        <Check className="h-[32px] w-[32px] text-white" strokeWidth={3} />
        <span className="h-[24px] w-[24px] rounded-full bg-white" />
      </div>
    );
  }
  return (
    <div className="mr-[25px] flex h-[46px] w-[91px] items-center rounded-full border-2 border-[#8a8886] bg-white pl-[12px]">
      <span className="h-[24px] w-[24px] rounded-full bg-[#555]" />
    </div>
  );
}

function SectionRow({ label, open, toggle, className }: { label: string; open?: boolean; toggle?: boolean; className: string }) {
  return (
    <div className={`flex items-center border-b-2 border-[#e1dfdd] ${className}`}>
      {open ? (
        <ChevronDown className="ml-[28px] h-[30px] w-[30px] text-[#252423]" strokeWidth={2.4} />
      ) : (
        <ChevronRight className="ml-[28px] h-[30px] w-[30px] text-[#252423]" strokeWidth={2.4} />
      )}
      <span className="ml-[14px] text-[36px] font-medium leading-none text-[#323130]">{label}</span>
      {toggle !== undefined && (
        <div className="ml-auto">
          <Toggle on={toggle} />
        </div>
      )}
    </div>
  );
}

function BuildIcon() {
  return (
    <svg viewBox="0 0 70 70" className="h-[70px] w-[70px]" fill="none" stroke="#333">
      <path d="M2 3h55" strokeWidth="3" />
      <rect x="2" y="17" width="66" height="50" strokeWidth="3" strokeDasharray="5 3" />
      <path d="M2 34h66M2 50h66" strokeWidth="3" strokeDasharray="5 3" />
    </svg>
  );
}

function FormatIcon() {
  return (
    <svg viewBox="0 0 70 76" className="h-[76px] w-[70px]">
      <path d="M4 72V36h14v-24h18v24h14" fill="none" stroke="#333" strokeWidth="3" />
      <rect x="20" y="14" width="14" height="44" fill="#117865" />
      <path d="M66 22C56 28 44 40 38 52l8 6c10-8 18-22 20-36z" fill="#fff" stroke="#333" strokeWidth="3" />
      <path d="M36 52c-6 2-8 8-8 14-2 2-6 4-8 4 8 4 22 2 26-10z" fill="#117865" stroke="#333" strokeWidth="2" />
    </svg>
  );
}

function AnalyticsIcon() {
  return (
    <svg viewBox="0 0 72 72" className="h-[72px] w-[72px]" fill="none" stroke="#333" strokeWidth="3">
      <circle cx="30" cy="30" r="27" />
      <path d="M50 50l18 18" strokeWidth="6" />
      <path d="M5 34l14-12 12 10 20-16" stroke="#333" />
      <path d="M14 30v22M24 28v28M34 34v22M44 26v22" strokeWidth="2.500" />
    </svg>
  );
}

function VizPane() {
  return (
    <div className="flex w-[519px] flex-col border-x-2 border-[#e1dfdd] bg-[#f3f2f1]">
      <div className="flex h-[108px] items-center justify-between pl-[26px] pr-[24px]">
        <span className="text-[46px] font-bold leading-none text-[#252423]">시각화</span>
        <ChevronsRight className="h-[42px] w-[42px] text-[#333]" strokeWidth={2} />
      </div>
      <div className="flex h-[44px] items-center pl-[26px] text-[36px] font-medium leading-none text-[#252423]">
        시각적 개체 서식 지정
      </div>
      <div className="mt-[12px] flex h-[91px] items-center">
        <div className="ml-[34px]">
          <BuildIcon />
        </div>
        <div className="ml-[110px] flex h-[91px] w-[92px] items-center justify-center rounded-[4px] bg-[#cfcfcf]">
          <FormatIcon />
        </div>
        <div className="ml-[107px]">
          <AnalyticsIcon />
        </div>
      </div>
      <svg viewBox="0 0 515 37" className="block h-[37px] w-[515px]" fill="none" stroke="#8a8886" strokeWidth="2.500">
        <path d="M0 35H240L258 15 276 35H515" />
      </svg>
      <div className="ml-[24px] mt-[23px] flex h-[75px] w-[467px] items-center rounded-[4px] border-2 border-[#8a8886]">
        <Search className="ml-[20px] h-[40px] w-[40px] -scale-x-100 text-[#605e5c]" strokeWidth={1.5} />
        <span className="ml-[18px] text-[44px] leading-none text-[#605e5c]">검색</span>
      </div>
      <div className="flex h-[156px] items-start pt-[53px] text-[43px] leading-none">
        <span className="ml-[38px] text-[#605e5c]">시각적 개체</span>
        <div className="relative ml-[49px]">
          <span className="font-bold text-[#252423]">일반</span>
          <span className="absolute bottom-[-18px] left-0 right-0 h-[4px] bg-[#117865]" />
        </div>
        <Ellipsis className="ml-[58px] mt-[4px] h-[36px] w-[36px] text-[#444]" strokeWidth={2.5} />
      </div>
      <SectionRow label="속성" className="h-[117px]" />
      <SectionRow label="제목" toggle={false} className="h-[116px]" />
      <SectionRow label="효과" className="h-[116px]" />
      <SectionRow label="데이터 서식" open className="h-[118px] border-b-0" />
      <div className="h-[630px] bg-[#e1dfdd] pl-[23px] pt-[22px]">
        <div className="h-[206px] w-[469px] rounded-[8px] bg-[#f3f2f1] pl-[23px] pt-[40px]">
          <div className="h-[34px] text-[36px] font-medium leading-[34px] text-[#323130]">설정 적용 대상</div>
          <div className="mt-[41px] flex h-[67px] w-[423px] items-center justify-between rounded-[4px] border-2 border-[#8a8886] pl-[24px] pr-[22px] text-[36px] leading-none text-[#605e5c]">
            참가국 수
            <ChevronUp className="h-[34px] w-[34px] text-[#444]" strokeWidth={1.5} />
          </div>
        </div>
        <div className="mt-[23px] h-[263px] w-[469px] rounded-[8px] bg-[#f3f2f1]" />
        <div className="mt-[38px] flex items-center pl-[14px] text-[36px] leading-none text-[#a19f9d]">
          <RotateCw className="h-[30px] w-[30px] -scale-x-100" strokeWidth={1.5} />
          <span className="ml-[20px]">기본값으로 다시 설정</span>
        </div>
      </div>
      <SectionRow label="머리글 아이콘" toggle className="h-[117px]" />
      <SectionRow label="대체 텍스트" className="h-[117px]" />
    </div>
  );
}

function CheckBox({ checked }: { checked?: boolean }) {
  return checked ? (
    <span className="flex h-[33px] w-[33px] shrink-0 items-center justify-center rounded-[3px] bg-[#117865]">
      <Check className="h-[26px] w-[26px] text-white" strokeWidth={3} />
    </span>
  ) : (
    <span className="h-[33px] w-[33px] shrink-0 rounded-[3px] border-2 border-[#8a8886] bg-[#f3f2f1]" />
  );
}

function TableRow({ label, badge, calc }: { label: string; badge?: boolean; calc?: boolean }) {
  return (
    <div className="flex h-[69px] items-center pl-[39px] text-[36px] leading-none text-[#3b3a39]">
      <ChevronDown className="h-[30px] w-[30px] shrink-0 text-[#605e5c]" strokeWidth={1.5} />
      <div className="relative ml-[15px] shrink-0">
        {calc ? (
          <Calculator className="h-[44px] w-[38px] text-[#333]" strokeWidth={1.6} />
        ) : (
          <Grid3x3 className="h-[44px] w-[38px] text-[#333]" strokeWidth={1.6} />
        )}
        {badge && (
          <span className="absolute bottom-[-12px] right-[-14px] flex h-[32px] w-[32px] items-center justify-center rounded-full bg-[#117865]">
            <Check className="h-[20px] w-[20px] text-white" strokeWidth={3.5} />
          </span>
        )}
      </div>
      <span className="ml-[15px] whitespace-nowrap">{label}</span>
    </div>
  );
}

function LeafRow({ label, checked, icon }: { label: string; checked?: boolean; icon?: "calc" | "sum" }) {
  return (
    <div className="flex h-[69px] items-center pl-[128px] text-[36px] leading-none text-[#3b3a39]">
      <CheckBox checked={checked} />
      <div className="ml-[24px] flex w-[33px] shrink-0 justify-center">
        {icon === "calc" && <Calculator className="h-[44px] w-[36px] text-[#333]" strokeWidth={1.7} />}
        {icon === "sum" && <Sigma className="-mx-[14px] h-[60px] w-[60px] shrink-0 text-[#444]" strokeWidth={1.2} />}
      </div>
      <span className="ml-[20px] whitespace-nowrap">{label}</span>
    </div>
  );
}

function DataPane() {
  return (
    <div className="flex flex-1 flex-col bg-[#f3f2f1]">
      <div className="flex h-[108px] items-center justify-between pl-[24px] pr-[20px]">
        <span className="text-[46px] font-bold leading-none text-[#252423]">데이터</span>
        <ChevronsRight className="h-[42px] w-[42px] text-[#333]" strokeWidth={2} />
      </div>
      <div className="ml-[14px] mt-[23px] flex h-[66px] w-[490px] items-center rounded-[6px] border border-b-[3px] border-[#d0d0d0] border-b-[#8a8886] bg-white">
        <Search className="ml-[30px] h-[42px] w-[42px] text-[#605e5c]" strokeWidth={1.5} />
        <span className="ml-[16px] text-[40px] leading-none text-[#8a8886]">검색</span>
      </div>
      <div className="mt-[25px]">
        <TableRow label="텍스트 보관용 테이블" calc />
        <LeafRow label="텍스트_개요" icon="calc" />
        <LeafRow label="텍스트_메달 세..." icon="calc" />
        <LeafRow label="텍스트_종목 세..." icon="calc" />
        <TableRow label="국가 테이블" badge />
        <LeafRow label="국가" checked />
        <LeafRow label="국기" />
        <LeafRow label="대륙" />
        <LeafRow label="인원 수" />
        <TableRow label="국가별 종목별 메달 수" badge />
        <LeafRow label="국가" />
        <LeafRow label="금" checked icon="sum" />
        <LeafRow label="동" checked icon="sum" />
        <LeafRow label="은" checked icon="sum" />
        <LeafRow label="종목" />
        <div className="flex h-[69px] items-center pl-[84px] text-[36px] leading-none text-[#3b3a39]">
          <ChevronRight className="h-[30px] w-[30px] text-[#605e5c]" strokeWidth={1.5} />
          <Folder className="ml-[11px] h-[42px] w-[42px] text-[#333]" strokeWidth={1.6} />
          <span className="ml-[15px]">측정값 모음</span>
        </div>
        <LeafRow label="합계" checked icon="sum" />
        <TableRow label="종목 테이블" />
        <LeafRow label="종목" />
        <LeafRow label="한 국가의 최대 ..." />
      </div>
    </div>
  );
}

function StatusBar() {
  return (
    <div className="flex h-[68px] items-center bg-[#f3f3f3] text-[#444]">
      <span className="ml-[10px] text-[34px] leading-none">2/4 페이지</span>
      <span className="ml-auto text-[38px] font-bold leading-none">-</span>
      <div className="relative ml-[12px] h-[3px] w-[287px] bg-[#666]">
        <span className="absolute left-[111px] top-[-14px] h-[31px] w-[11px] bg-[#555]" />
        <span className="absolute left-[143px] top-[-7px] h-[17px] w-[2px] bg-[#666]" />
      </div>
      <Plus className="ml-[12px] h-[32px] w-[32px]" strokeWidth={2.5} />
      <span className="ml-[32px] text-[33px] leading-none">83%</span>
      <Maximize className="ml-[56px] mr-[50px] h-[38px] w-[40px]" strokeWidth={1.6} />
    </div>
  );
}

function RedBox({ className }: { className: string }) {
  return <div className={`absolute border-[9px] border-[#ff0000] ${className}`} />;
}

function Badge({ n, className }: { n: number; className: string }) {
  return (
    <div
      className={`absolute flex h-[168px] w-[168px] items-center justify-center rounded-full border-[15px] border-[#cc0000] bg-white font-['Liberation_Sans',sans-serif] text-[112px] font-bold leading-none text-[#cc0000] ${className}`}
    >
      {n}
    </div>
  );
}

const DROPDOWN = ["금메달 합계", "은메달 합계", "동메달 합계", "메달 총계"];

export default function App() {
  // the browser window can come out narrower than the 4400px design, squeeze to fit
  const fit = Math.min(1, window.innerWidth / 4400);
  return (
    <div className="h-[2475px] w-full overflow-hidden">
      <div
        style={{ transform: `scaleX(${fit})` }}
        className="relative flex h-[2475px] w-[4400px] origin-top-left flex-col bg-[#3b3b3b] font-['Noto_Sans','Noto_Sans_CJK_KR',sans-serif]"
      >
        <BrowserBars />
        <div className="mb-[10px] ml-[12px] mr-[15px] flex flex-1 flex-col overflow-hidden rounded-[18px]">
          <AppHeader />
          <div className="flex flex-1">
            <LeftNav />
            <div className="flex flex-1 flex-col">
              <Toolbar />
              <div className="flex flex-1">
                <div className="flex w-[3147px] flex-col">
                  <div className="flex flex-1">
                    <Canvas />
                    <FilterStrip />
                  </div>
                  <PageTabs />
                </div>
                <VizPane />
                <DataPane />
              </div>
              <StatusBar />
            </div>
          </div>
        </div>

        {/* dropdown open over the format pane */}
        <div className="absolute left-[3401px] top-[1683px] h-[344px] w-[423px] bg-white text-[36px] leading-none text-[#323130] shadow-[0_6px_14px_rgba(0,0,0,0.18)]">
          <div className="flex h-[70px] items-center bg-[#edebe9] pl-[24px]">참가국 수</div>
          {DROPDOWN.map((d) => (
            <div key={d} className="flex h-[68.500px] items-center pl-[24px]">
              {d}
            </div>
          ))}
        </div>

        <RedBox className="left-[3628px] top-[879px] h-[102px] w-[117px]" />
        <RedBox className="left-[3352px] top-[1358px] h-[131px] w-[374px]" />
        <RedBox className="left-[3715px] top-[1594px] h-[101px] w-[133px]" />
        <RedBox className="left-[3378px] top-[1945px] h-[99px] w-[431px]" />
        <Badge n={1} className="left-[3754px] top-[761px]" />
        <Badge n={2} className="left-[3598px] top-[1185px]" />
        <Badge n={3} className="left-[3761px] top-[1428px]" />
        <Badge n={4} className="left-[3754px] top-[1775px]" />
      </div>
    </div>
  );
}
